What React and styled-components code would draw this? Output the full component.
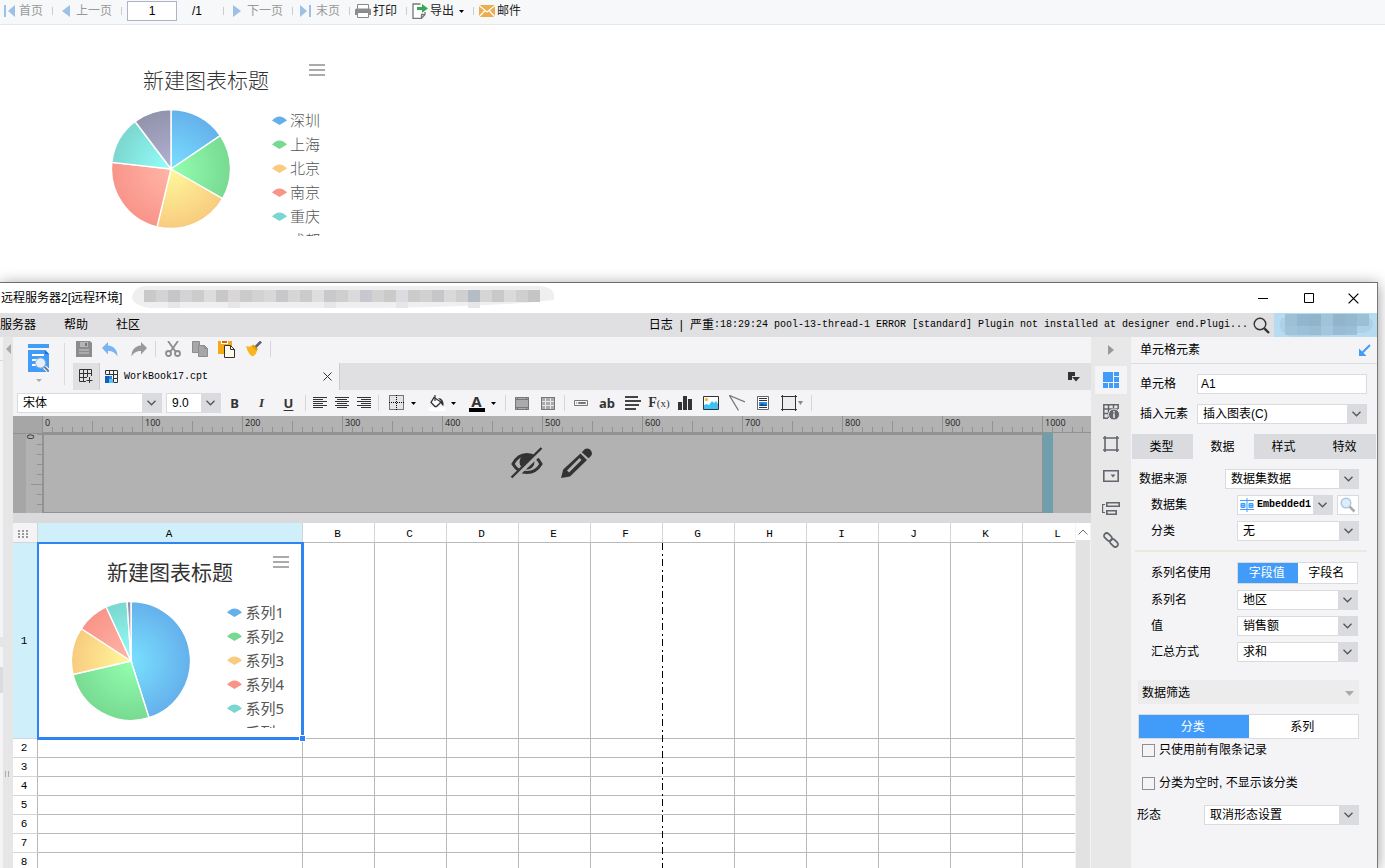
import React from "react";
import styled, { createGlobalStyle, css } from "styled-components";

const SANS = `"Liberation Sans", "Noto Sans CJK SC", sans-serif`;
const MONO = `"Liberation Mono", "Noto Sans CJK SC", monospace`;

const GlobalStyle = createGlobalStyle`
  * { box-sizing: border-box; }
  body { margin: 0; background: #fff; color: #000; font: 12px/16px ${SANS}; }
  button, input, select { font: inherit; color: inherit; }
  button { border: 0; padding: 0; background: none; }
  svg { display: block; flex: none; }
`;

const Page = styled.div`
  display: flex;
  flex-direction: column;
  height: 100vh;
  overflow: hidden;
`;

/* ---------- report preview ---------- */

const PreviewBar = styled.header`
  display: flex;
  align-items: center;
  height: 25px;
  padding: 0 4px 2px;
  background: #f6f8fa;
  border-bottom: 1px solid #e3e6ea;
`;

const BarItem = styled.button`
  display: flex;
  align-items: center;
  gap: ${(p) => p.$gap || 5}px;
  padding-left: ${(p) => p.$left || 0}px;
  margin-right: 9px;
  color: ${(p) => (p.disabled ? "#999" : "#222")};
  white-space: nowrap;
`;

const BarCaret = styled.span`
  margin-left: 3px;
`;

const BarSep = styled.span`
  width: 1px;
  height: 8px;
  background: #ccc;
`;

const PageInput = styled.input`
  width: 50px;
  height: 20px;
  margin-left: 5px;
  border: 1px solid #adb4c4;
  background: #fff;
  text-align: center;
  font-size: 12px;
`;

const PageTotal = styled.span`
  width: 46px;
  padding-left: 15px;
`;

const Preview = styled.section`
  padding: 26px 74px 36px;
`;

/* ---------- chart ---------- */

const ChartBox = styled.figure`
  position: relative;
  width: 264px;
  height: 195px;
  margin: 0;
  font-family: "Noto Sans", "Noto Sans CJK SC", sans-serif;
  font-weight: ${(p) => (p.$strong ? 400 : 300)};
`;

const ChartTitle = styled.figcaption`
  height: 57px;
  padding-top: 15px;
  font-size: 21px;
  line-height: 28px;
  text-align: center;
  color: #333;
`;

const ChartMenu = styled.button`
  position: absolute;
  top: 13px;
  right: 13px;
`;

const ChartBody = styled.div`
  display: flex;
  height: 128px;
  padding-right: 18px;
`;

const PieWrap = styled.div`
  flex: 1;
  display: flex;
  justify-content: center;
  padding: 1px 3px 0 0;
`;

const Legend = styled.ul`
  margin: 0;
  padding: 0;
  overflow: hidden;
  list-style: none;
`;

const LegendItem = styled.li`
  display: flex;
  align-items: center;
  gap: 3px;
  font-size: 15px;
  line-height: 24px;
  color: #555;
`;

const SLICES = [
  ["#64b0eb", "#7ae0ff"],
  ["#77da91", "#93ffb0"],
  ["#f8cb7f", "#fff99b"],
  ["#f99489", "#ffb6a8"],
  ["#7bd6cf", "#95fffa"],
  ["#9192ab", "#b2b2d2"],
];

const point = (deg) => {
  const a = (deg * Math.PI) / 180;
  return `${60 + 59.5 * Math.sin(a)} ${60 - 59.5 * Math.cos(a)}`;
};

const Pie = ({ id, stops }) => (
  <svg width="120" height="120" viewBox="0 0 120 120">
    <defs>
      {SLICES.map(([edge, center], i) => (
        <radialGradient key={edge} id={`${id}-${i}`} gradientUnits="userSpaceOnUse" cx="60" cy="60" r="60">
          <stop offset="0" stopColor={center} />
          <stop offset="1" stopColor={edge} />
        </radialGradient>
      ))}
    </defs>
    {SLICES.map(([edge], i) => {
      const from = i ? stops[i - 1] : 0;
      const to = stops[i];
      return (
        <path
          key={edge}
          d={`M60 60L${point(from)}A59.5 59.5 0 ${to - from > 180 ? 1 : 0} 1 ${point(to)}Z`}
          fill={`url(#${id}-${i})`}
          stroke="#fff"
          strokeWidth="1.4"
        />
      );
    })}
  </svg>
);

const Chart = ({ id, stops, names, strong }) => (
  <ChartBox $strong={strong}>
    <ChartTitle>新建图表标题</ChartTitle>
    <ChartMenu aria-label="menu">
      <svg width="16" height="12" fill="#aaa">
        <path d="M0 0h16v2H0zM0 5h16v2H0zM0 10h16v2H0z" />
      </svg>
    </ChartMenu>
    <ChartBody>
      <PieWrap>
        <Pie id={id} stops={stops} />
      </PieWrap>
      <Legend>
        {names.map((name, i) => (
          <LegendItem key={name}>
            <svg width="15" height="9">
              <path d="M0 4.500Q7.500 -3.500 15 4.500L7.500 9Z" fill={SLICES[i][0]} />
            </svg>
            {name}
          </LegendItem>
        ))}
      </Legend>
    </ChartBody>
  </ChartBox>
);

/* ---------- designer window ---------- */

const Window = styled.section`
  flex: 1;
  display: flex;
  flex-direction: column;
  min-height: 0;
  margin-right: 7px;
  background: #f4f4f7;
  border-top: 1px solid #6e6e6e;
  border-right: 1px solid #777;
  box-shadow: 0 2px 14px rgba(0, 0, 0, 0.4);
`;

const TitleBar = styled.div`
  display: flex;
  align-items: center;
  flex: none;
  height: 30px;
  padding: 0 18px 0 1px;
  background: #fff;
  white-space: nowrap;
`;

const TitleText = styled.span`
  margin-right: 10px;
`;

const WindowButtons = styled.div`
  display: flex;
  gap: 31px;
  margin-left: auto;
`;

const MenuBar = styled.nav`
  display: flex;
  align-items: center;
  flex: none;
  height: 24px;
  background: #e0e0e2;
  white-space: nowrap;
`;

const MenuItem = styled.button`
  margin-right: 28px;
`;

const LogLine = styled.div`
  display: flex;
  align-items: center;
  gap: 7px;
  margin-left: auto;
`;

const LogText = styled.span`
  font-family: ${MONO};
  font-size: 10px;
`;

const LogMessage = styled.span`
  display: flex;
  align-items: center;
`;

const SearchButton = styled.button`
  margin: 0 4px 0 5px;
`;

const UserBadge = styled.div`
  height: 24px;
  background: #b7dbf1;
`;

const Body = styled.div`
  flex: 1;
  display: flex;
  min-height: 0;
`;

const DockEdge = styled.div`
  display: flex;
  flex-direction: column;
  width: 3px;
  background: #f4f4f7;
`;

const DockBlock = styled.span`
  height: ${(p) => p.$size}px;
  margin-top: ${(p) => p.$top}px;
  background: ${(p) => p.$tone};
`;

const DockBar = styled.div`
  display: flex;
  flex-direction: column;
  align-items: flex-end;
  width: 10px;
  padding: 7px 2px 0 0;
  background: #e6e6e6;
`;

const DockGrip = styled.span`
  width: 4px;
  height: 6px;
  margin: 417px 2px 0 0;
  border: solid #aaa;
  border-width: 0 1px;
`;

const Main = styled.main`
  flex: 1;
  display: flex;
  flex-direction: column;
  min-width: 0;
`;

const TopTools = styled.div`
  display: flex;
  flex: none;
  height: 53px;
`;

const DataButton = styled.button`
  display: flex;
  flex-direction: column;
  align-items: center;
  gap: 6px;
  width: 51px;
  padding-top: 7px;
`;

const TallSep = styled.span`
  width: 1px;
  height: 42px;
  margin: 6px 8px 0 0;
  background: #dadbde;
`;

const TopRight = styled.div`
  flex: 1;
  min-width: 0;
`;

const ToolRow = styled.div`
  display: flex;
  align-items: center;
  height: 26px;
  padding-bottom: 2px;
`;

const Tool = styled.button`
  display: flex;
  align-items: center;
  justify-content: center;
  gap: ${(p) => p.$gap || 6}px;
  width: ${(p) => p.$w || 26}px;
  height: 22px;
  color: #333;
`;

const ToolSep = styled.span`
  width: 1px;
  height: 16px;
  margin: 0 3px;
  background: #d6d6da;
`;

const TabStrip = styled.div`
  display: flex;
  align-items: center;
  height: 27px;
  padding-right: 11px;
  background: #e0e0e2;
`;

const FileTab = styled.div`
  display: flex;
  align-items: center;
  gap: 6px;
  width: 241px;
  height: 27px;
  padding: 0 7px 0 5px;
  margin-right: auto;
  background: #f4f4f7;
  border: solid #cbccd0;
  border-width: 0 1px;
  font-family: ${MONO};
  font-size: 10px;
`;

const CloseTab = styled.button`
  margin-left: auto;
`;

const FormatBar = styled.div`
  display: flex;
  align-items: center;
  flex: none;
  height: 26px;
  padding-left: 4px;
`;

const Letter = styled.span`
  font: ${(p) => (p.$italic ? "italic" : "normal")} bold 13px/14px
    ${(p) => (p.$italic ? `"Liberation Serif", serif` : `"Noto Sans", sans-serif`)};
  text-decoration: ${(p) => (p.$under ? "underline" : "none")};
  text-underline-offset: 2px;
`;

const ColorLetter = styled.span`
  width: 16px;
  border-bottom: 4px solid #000;
  font: bold 15px/13px "Noto Sans", sans-serif;
  text-align: center;
`;

const Formula = styled.span`
  font: bold 14px/16px "Liberation Serif", serif;

  small {
    font-size: 11px;
    font-weight: normal;
  }
`;

/* select with its own arrow cell */

const SelectShell = styled.div`
  display: flex;
  align-items: center;
  position: relative;
  flex: ${(p) => (p.$w ? "none" : 1)};
  width: ${(p) => (p.$w ? `${p.$w}px` : "auto")};
  min-width: 0;
  height: 20px;
  margin-right: ${(p) => p.$gap || 0}px;
  padding-left: ${(p) => (p.$icon ? 2 : 0)}px;
  background: linear-gradient(#dadbde, #dadbde) right / 19px 100% no-repeat #fff;
  border: 1px solid #dadbde;
`;

const Native = styled.select`
  flex: 1;
  min-width: 0;
  height: 18px;
  padding: 0 19px 0 ${(p) => (p.$mono ? 3 : 5)}px;
  appearance: none;
  background: none;
  border: 0;
  ${(p) =>
    p.$mono &&
    css`
      font-family: ${MONO};
      font-size: 10px;
      font-weight: bold;
    `}
`;

const ArrowMark = styled.svg`
  position: absolute;
  right: 5px;
  top: 6px;
  pointer-events: none;
`;

const Select = ({ id, value, w, gap, icon, mono, label }) => (
  <SelectShell $w={w} $gap={gap} $icon={!!icon}>
    {icon}
    <Native id={id} aria-label={label} $mono={mono}>
      <option>{value}</option>
    </Native>
    <ArrowMark width="9" height="6" fill="none" stroke="#555" strokeWidth="1.3">
      <path d="M.5 .8l4 4 4-4" />
    </ArrowMark>
  </SelectShell>
);

/* ---------- rulers and parameter pane ---------- */

const Ruler = styled.div`
  display: flex;
  flex: none;
  height: 17px;
  padding-left: 29px;
  overflow: hidden;
  background: linear-gradient(#a6a6a6, #a6a6a6) left / 29px 100% no-repeat #b2b2b2;
`;

const RulerMark = styled.span`
  flex: none;
  width: 100px;
  height: 17px;
  padding-left: 3px;
  border-bottom: 1px solid #929292;
  background:
    linear-gradient(#929292, #929292) 0 0 / 1px 100% no-repeat,
    linear-gradient(#929292, #929292) 50px 100% / 1px 11px no-repeat,
    repeating-linear-gradient(90deg, #929292 0 1px, transparent 1px 10px) 0 100% / 100% 5px no-repeat;
  font: 9px/14px "Open Sans", sans-serif;
  color: #222;
`;

const ParamPane = styled.div`
  display: flex;
  position: relative;
  flex: none;
  height: 80px;
  overflow: hidden;
  background: #b2b2b2;
`;

const SideRuler = styled.div`
  width: 29px;
  padding-left: 13px;
  background:
    linear-gradient(#929292, #929292) 18px 50px / 11px 1px no-repeat,
    repeating-linear-gradient(#929292 0 1px, transparent 1px 10px) 100% 0 / 5px 100% no-repeat,
    linear-gradient(#a6a6a6, #a6a6a6) left / 13px 100% no-repeat #b2b2b2;
  border-top: 1px solid #929292;
`;

const SideZero = styled.span`
  display: block;
  width: 10px;
  font: 9px/10px "Open Sans", sans-serif;
  writing-mode: vertical-rl;
  transform: rotate(180deg);
  color: #222;
`;

const ParamBody = styled.div`
  width: 1001px;
  border: solid #929292;
  border-width: 2px 1px 1px 2px;
`;

const ParamHandle = styled.div`
  width: 10px;
  background: #6f9eac;
`;

const ParamActions = styled.div`
  display: flex;
  justify-content: center;
  gap: 17px;
  position: absolute;
  inset: 14px 3px auto 0;
`;

const PaneGap = styled.div`
  flex: none;
  height: 10px;
  background: #dadadc;
`;

/* ---------- sheet ---------- */

const SheetArea = styled.div`
  flex: 1;
  display: flex;
  min-height: 0;
`;

const SheetView = styled.div`
  flex: 1;
  position: relative;
  min-width: 0;
  overflow: hidden;
  background: #fff;
`;

const Sheet = styled.table`
  width: 1082px;
  table-layout: fixed;
  border-collapse: separate;
  border-spacing: 0;
`;

const Col = styled.col`
  width: ${(p) => p.$w}px;
`;

const Head = styled.th`
  height: 20px;
  padding: 2px 2px 0 0;
  border-right: 1px solid #d4d5d8;
  border-bottom: 1px solid #b9b9b9;
  background: ${(p) => (p.$active ? "#cff0fb" : "#fff")};
  font: 11px/16px "Liberation Mono", monospace;
`;

const RowHead = styled(Head)`
  height: ${(p) => (p.$active ? 196 : 19)}px;
  padding-top: 0;
  border-right-color: #b9b9b9;
  border-bottom-color: #d4d5d8;
`;

const Corner = styled.td`
  padding: 3px 0 0 5px;
  background: #f4f4f7;
  border-right: 1px solid #d4d5d8;
  border-bottom: 1px solid #d4d5d8;
`;

const Cell = styled.td`
  position: relative;
  padding: 0;
  vertical-align: top;
  border-right: 1px solid #b9b9b9;
  border-bottom: 1px solid #b9b9b9;
`;

const Selection = styled.div`
  position: absolute;
  z-index: 1;
  inset: -1px -2px -2px -1px;
  border: solid #3083f2;
  border-width: 2px 3px 3px 2px;
  pointer-events: none;

  &::after {
    content: "";
    position: absolute;
    right: -4px;
    bottom: -4px;
    width: 5px;
    height: 5px;
    background: #3083f2;
    outline: 1px solid #fff;
  }
`;

const PageBreak = styled.div`
  position: absolute;
  top: 20px;
  bottom: 0;
  left: 649px;
  width: 1px;
  background: repeating-linear-gradient(#000 0 7px, #fff 7px 11px, #000 11px 13px, #fff 13px 16px);
`;

const ScrollBar = styled.div`
  width: 16px;
  background: #e2e2e2;
  border: solid #f4f4f7;
  border-width: 0 1px;
`;

const ScrollUp = styled.button`
  display: flex;
  align-items: center;
  justify-content: center;
  width: 100%;
  height: 17px;
  background: #fff;
`;

/* ---------- right side ---------- */

const IconRail = styled.aside`
  display: flex;
  flex-direction: column;
  align-items: center;
  gap: 4px;
  width: 40px;
  background: #e8e8e8;
`;

const RailButton = styled.button`
  display: flex;
  align-items: center;
  justify-content: center;
  width: 32px;
  height: ${(p) => (p.$short ? 25 : 28)}px;
  background: ${(p) => (p.$active ? "#f4f4f7" : "transparent")};
`;

const Panel = styled.aside`
  width: 246px;
  background: #f4f4f7;
`;

const PanelHead = styled.div`
  display: flex;
  align-items: center;
  justify-content: space-between;
  height: 27px;
  padding: 0 6px 0 9px;
  border-bottom: 1px solid #dadbde;
`;

const Fields = styled.div`
  display: flex;
  flex-direction: column;
  gap: ${(p) => p.$gap || 6}px;
  padding: ${(p) => p.$pad};
`;

const Field = styled.div`
  display: flex;
  align-items: center;
  padding-left: ${(p) => p.$indent || 0}px;
`;

const FieldLabel = styled.label`
  flex: none;
  width: ${(p) => p.$w}px;
  white-space: nowrap;
`;

const TextBox = styled.input`
  flex: 1;
  min-width: 0;
  height: 20px;
  padding: 0 3px;
  background: #fff;
  border: 1px solid #dadbde;
`;

const PanelTabs = styled.div`
  display: flex;
  height: 25px;
  margin: 0 1px;
  background: #dadbde;
`;

const PanelTab = styled.button`
  flex: 1;
  padding-right: 2px;
  background: ${(p) => (p.$active ? "#f4f4f7" : "transparent")};
`;

const PreviewButton = styled.button`
  display: flex;
  align-items: center;
  justify-content: center;
  width: 22px;
  height: 20px;
  background: #fff;
  border: 1px solid #dadbde;
`;

const Rule = styled.hr`
  height: 2px;
  margin: 0 10px 0 4px;
  border: 0;
  background: #e9eadf;
`;

const Segment = styled.div`
  flex: 1;
  display: flex;
  height: ${(p) => p.$h}px;
  background: #fff;
  border: 1px solid #dadbde;
`;

const SegmentButton = styled.button`
  flex: 1;
  padding-right: 2px;
  background: ${(p) => (p.$active ? "#419bf9" : "#fff")};
  color: ${(p) => (p.$active ? "#fff" : "#000")};
`;

const Filter = styled.section`
  display: flex;
  flex-direction: column;
  gap: 10px;
  padding: 18px 18px 0 7px;
`;

const FilterHead = styled.button`
  display: flex;
  align-items: center;
  justify-content: space-between;
  height: 24px;
  padding: 2px 5px 0 4px;
  background: #ececec;
`;

const Checks = styled.div`
  display: flex;
  flex-direction: column;
  gap: 17px;
  padding: 3px 18px 0 11px;
`;

const Check = styled.label`
  display: flex;
  align-items: center;
  gap: 4px;
`;

const CheckBox = styled.input`
  appearance: none;
  width: 13px;
  height: 13px;
  margin: 0;
  border: 1px solid #8e8e93;
`;

/* ---------- icons ---------- */

const Triangle = ({ left, bar }) => (
  <svg width={bar ? 11 : 9} height="12" fill="#9dc0e4">
    {left ? (
      <path d={bar ? "M0 0h2v12H0zM11 0v12L4 6z" : "M8 0v12L0 6z"} />
    ) : (
      <path d={bar ? "M0 0v12l7-6zM9 0h2v12H9z" : "M0 0v12l8-6z"} />
    )}
  </svg>
);

const Caret = ({ color = "#000", w = 5, h = 3 }) => (
  <svg width={w} height={h} viewBox="0 0 6 3" preserveAspectRatio="none" fill={color}>
    <path d="M0 0h6L3 3z" />
  </svg>
);

const Printer = () => (
  <svg width="16" height="14">
    <path d="M2.500 5V.5h11V5" fill="#fff" stroke="#888" />
    <path d="M1.500 4.500h13a1.500 1.500 0 0 1 1.500 1.500v5H0V6a1.500 1.500 0 0 1 1.500-1.500z" fill="#8d8d8d" />
    <path d="M2.500 8.500h11v5h-11z" fill="#fff" stroke="#888" />
  </svg>
);

const Export = () => (
  <svg width="16" height="16" fill="none" stroke="#777" strokeWidth="1.300">
    <path d="M8.500 1H1v14.300h8.500L13 11.500V9" fill="#fff" />
    <path d="M9.500 15v-3.500H13" />
    <path d="M5 4h5V1l6 4.500-6 4.300V7H5z" fill="#35a853" stroke="none" />
  </svg>
);

const Mail = () => (
  <svg width="16" height="12">
    <path d="M0 0h16v12H0z" fill="#ecad4f" />
    <path d="M0 .5l8 6.500 8-6.500M0 12l6-6.500M16 12l-6-6.500" fill="none" stroke="#fff" strokeWidth="1.200" />
  </svg>
);

const TITLE_TONES = "#c9c9c9 #d3d2d5 #c6c6c6 #d3d3d6 #ccc #dcdcdc #c8c8c8 #d8d6d6 #cbcbcb #d2d2d5 #d8d8d8 #c8c8cb #d6d6d6 #cdcaca #dedede #c9c9cc #cfcfcf #dadada #c7c7cf #d2d2d2 #cacaca #dcdce0 #cbcbcb #d1d1d1 #c6c6c8 #d9d9d9 #cfcfd1 #b5bcc6 #d5d5d5 #c9c9c9 #dadada #cfcfcf #c5c5c5".split(" ");

const TitleMosaic = () => (
  <svg width="422" height="26">
    <path d="M12 1h396q14 2 14 9v5q-60 7-180 8H18Q0 20 0 12 2 2 12 1z" fill="#efefef" />
    {TITLE_TONES.map((tone, i) => (
      <rect key={i} x={12 + i * 12} y="5" width="12" height="12" fill={tone} />
    ))}
    {[2, 7, 15, 21, 27].map((i) => (
      <rect key={i} x={12 + i * 12} y="17" width="12" height="6" fill="#e6e6e8" />
    ))}
  </svg>
);

const BADGE_TONES = ["#9dc0d5", "#91b7ce", "#8fb4cb", "#a0c3d8", "#92b5cb", "#94b9cf", "#9bbfd5"];

const BadgeMosaic = () => (
  <svg width="103" height="24">
    <path d="M8 5q40-6 80-4 13 4 11 12-3 8-16 7-50 5-68 3-14-6-7-18z" fill="#aed1e6" />
    {BADGE_TONES.map((tone, i) => (
      <rect key={i} x={11 + i * 12} y="1" width="12" height="12" fill={tone} />
    ))}
    {BADGE_TONES.slice(0, 6).map((tone, i) => (
      <rect key={i} x={11 + i * 12} y="13" width="12" height="9" fill={BADGE_TONES[6 - i]} opacity=".7" />
    ))}
  </svg>
);

const Search = () => (
  <svg width="17" height="17" fill="none" stroke="#333">
    <circle cx="7" cy="7" r="5.800" strokeWidth="1.400" />
    <path d="M11.300 11.300l4.700 4.700" strokeWidth="2.400" />
  </svg>
);

const DataIcon = () => (
  <svg width="22" height="29">
    <path d="M0 0h21v4H0zM0 6h17l4 4v18H0z" fill="#419bf9" />
    <path d="M17 6v4h4z" fill="#1f6fc4" />
    <path d="M4 11h12M4 16h5M4 21h4" stroke="#fff" strokeWidth="2" />
    <circle cx="12.500" cy="19" r="5" fill="#e3f0fa" stroke="#9fb6c8" />
    <path d="M16.500 23l3.500 3.500" stroke="#fff" strokeWidth="4" />
    <path d="M16.500 23l3.500 3.500" stroke="#777" strokeWidth="2" />
  </svg>
);

const Save = () => (
  <svg width="16" height="16">
    <path d="M0 0h14l2 2v14H0z" fill="#8c8c8c" />
    <path d="M4 1h8v5H4z" fill="#b5b5b5" />
    <path d="M9 2h2v3H9z" fill="#777" />
    <path d="M3 9h10M3 12h10" stroke="#b5b5b5" strokeWidth="1.500" />
  </svg>
);

const Undo = ({ redo }) => (
  <svg width="16" height="15" viewBox="0 0 16 15">
    <path
      d="M6 0v3.500C12 4 15.500 8 15.500 14.500 13 10.500 10.500 9 6 9v3.500L0 6z"
      fill={redo ? "#999" : "#7ab5f2"}
      transform={redo ? "matrix(-1 0 0 1 16 0)" : undefined}
    />
  </svg>
);

const Cut = () => (
  <svg width="16" height="16" fill="none" stroke="#8c8c8c" strokeWidth="1.800">
    <path d="M3 0l7.500 10.500M13 0L5.500 10.500" />
    <circle cx="3.500" cy="12.500" r="2.500" />
    <circle cx="12.500" cy="12.500" r="2.500" />
  </svg>
);

const Copy = () => (
  <svg width="16" height="16" fill="#a6a6a6" stroke="#8c8c8c">
    <path d="M.5 .5h7v11h-7z" />
    <path d="M6.500 4.500h6l3 3v8h-9z" />
    <path d="M12.500 4.500v3h3" fill="none" />
  </svg>
);

const Paste = () => (
  <svg width="17" height="17">
    <path d="M0 0h14v13H0z" fill="#f4a914" />
    <path d="M3 0h7v3H3z" fill="#fff" />
    <path d="M4 0h5v2H4z" fill="#e2600c" />
    <path d="M6.500 4.500h6l4 4v8h-10z" fill="#fff9e8" stroke="#333" />
    <path d="M12.500 4.500v4h4" fill="none" stroke="#333" />
  </svg>
);

const Brush = () => (
  <svg width="16" height="16">
    <path d="M15 .5L8.500 7" stroke="#5b6273" strokeWidth="2.600" />
    <path d="M0 5q4 1.500 6-.5l5 5.500q-1 4-4.500 5.500Q2 13 0 5z" fill="#f8b61c" />
    <path d="M5.500 5l2-1.500 4.500 4.500-1.500 2z" fill="#e59a10" />
  </svg>
);

const GridPlus = () => (
  <svg width="14" height="15" fill="none" stroke="#333">
    <path d="M7 12.500H.5V.5h12V7M.5 4.500h12M.5 8.500H8M4.500 .5v12M8.500 .5V8M10.500 8v6M7.500 11.500h6" />
  </svg>
);

const BookIcon = () => (
  <svg width="13" height="14" fill="none" stroke="#333">
    <path d="M.5 4V.5h12v12H9M.5 4.500h12M8 8.500h4.500M4.500 .5v4M8.500 .5v12" />
    <path d="M0 6h4v7H0z" fill="#1262b8" stroke="none" />
    <path d="M4 6h3v3H4z" fill="#2d8ae0" stroke="none" />
    <path d="M4 9h4v4H4z" fill="#4fc3f7" stroke="none" />
  </svg>
);

const Cross = ({ size = 9, color = "#333" }) => (
  <svg width={size} height={size} viewBox="0 0 9 9" stroke={color}>
    <path d="M.5 .5l8 8M8.500 .5l-8 8" />
  </svg>
);

const TabListIcon = () => (
  <svg width="12" height="10" fill="#333">
    <path d="M0 0h7v4H4v4H0zM4 5h8L8 9.500z" />
  </svg>
);

const AlignIcon = ({ d }) => (
  <svg width="15" height="12" stroke="#333" strokeWidth="1">
    <path d={d} />
  </svg>
);

const BorderIcon = () => (
  <svg width="16" height="16" fill="#e4e4e7" stroke="#000">
    <path d="M.5 .5h14v14H.5zM7.500 0v15M0 7.500h15" strokeDasharray="1 1" />
  </svg>
);

const FillIcon = () => (
  <svg width="16" height="16">
    <path d="M0 12h16v4H0z" fill="#fff" />
    <path d="M5 2.500l7 4.500-4.500 4.500H6L2 7.500z" fill="#fff" stroke="#333" strokeWidth="1.300" />
    <path d="M6 0v6" stroke="#333" strokeWidth="1.200" />
    <path d="M9 3q6 0 5.500 8Q11 9 12 6z" fill="#333" />
  </svg>
);

const MergeIcon = ({ split }) => (
  <svg width="14" height="13" fill="none" stroke="#777">
    <path d="M.5 .5h13v12H.5z" fill="#aaa" />
    {split ? (
      <path d="M1 4.500h12M1 8.500h12M4.500 1v11M9.500 1v11" stroke="#e6e6e6" />
    ) : (
      <path d="M0 2.500h14M0 10.500h14M2.500 0v3M11.500 0v3M2.500 10v3M11.500 10v3" />
    )}
    <path d="M.5 .5h13v12H.5z" />
  </svg>
);

const FieldIcon = () => (
  <svg width="14" height="6" fill="none" stroke="#777">
    <path d="M.5 .5h13v5H.5zM2 3h1M4.500 2.500h7v1h-7z" />
  </svg>
);

const ParagraphIcon = () => (
  <svg width="16" height="14" stroke="#444" strokeWidth="2">
    <path d="M0 1h13M0 5h16M0 9h14M0 13h11" />
  </svg>
);

const BarsIcon = () => (
  <svg width="14" height="14" fill="#333">
    <path d="M0 6h4v8H0zM5 0h4v14H5zM10 3h4v11h-4z" />
  </svg>
);

const PictureIcon = () => (
  <svg width="16" height="14">
    <path d="M.5 .5h15v13H.5z" fill="#fff" stroke="#333" />
    <circle cx="3.500" cy="3.500" r="1.700" fill="#f8b74a" />
    <path d="M1 9l3-1 2 1 3-4 2 2 2-2 2 3v5H1z" fill="#3fc1f5" />
  </svg>
);

const SlopeIcon = () => (
  <svg width="16" height="16" fill="none" stroke="#777" strokeWidth="1.300">
    <path d="M16 7L.5 .5l9 15" />
  </svg>
);

const SubReport = () => (
  <svg width="12" height="14">
    <path d="M.5 .5h11v13H.5z" fill="#fff" stroke="#666" />
    <path d="M2 2.500h8M2 4.500h8M2 11.500h8" stroke="#333" />
    <path d="M2 6h8v4H2z" fill="#2f8eea" />
    <path d="M2 10l3-3 2 2 2-1 1 2z" fill="#0a4c9a" />
  </svg>
);

const ShapeIcon = () => (
  <svg width="16" height="16" fill="#eee" stroke="#333">
    <path d="M1.500 1.500h13v13h-13zM1.500 0v16M14.500 0v16M0 1.500h16M0 14.500h16" />
  </svg>
);

const FrameIcon = () => (
  <svg width="16" height="16" fill="none" stroke="#63666e" strokeWidth="1.600">
    <path d="M2 0v16M14 0v16M0 2h16M0 14h16" />
  </svg>
);

const EyeOff = () => (
  <svg width="34" height="32" viewBox="0 0 34 32">
    <path d="M3 17Q8 7.500 17 7.500T31 17Q26 25.500 17 25.500T3 17z" fill="none" stroke="#333" strokeWidth="3" />
    <circle cx="17" cy="15" r="7.500" fill="#333" />
    <path d="M2.500 31.500L33 3" stroke="#b2b2b2" strokeWidth="5" />
    <path d="M1.500 30.500L31.500 1" stroke="#333" strokeWidth="2.400" />
  </svg>
);

const Pencil = () => (
  <svg width="31" height="32" viewBox="0 0 31 32" fill="#333">
    <path d="M22 4q3-4 7-1.500 4 4 0 7.500l-1.500 1.200-6.700-6z" />
    <path d="M19.500 6.500l6.500 6.500L9 29.500 0 31l2.200-8.500zM18.500 11L6 23.500l2 2L20.500 13z" fillRule="evenodd" />
  </svg>
);

const CornerDots = () => (
  <svg width="11" height="8" fill="#999">
    <path d="M0 0h2v2H0zM4 0h2v2H4zM8 0h2v2H8zM0 3h2v2H0zM4 3h2v2H4zM8 3h2v2H8zM0 6h2v2H0zM4 6h2v2H4zM8 6h2v2H8z" />
  </svg>
);

const CellElementIcon = () => (
  <svg width="16" height="16" fill="#419bf9">
    <path d="M0 0h10v10H0zM11 0h5v4h-5zM11 5h5v5h-5zM0 11h5v5H0zM6 11h4v5H6zM11 11h5v5h-5z" />
  </svg>
);

const CellAttrIcon = () => (
  <svg width="17" height="16" fill="none" stroke="#63666e" strokeWidth="1.500">
    <path d="M5 14.200H.8V.8h14.400V5M0 5h15M0 9.500h6M5.500 1v13M10.500 1v4" />
    <circle cx="11" cy="10.500" r="5.500" fill="#63666e" stroke="#e8e8e8" strokeWidth="1" />
    <path d="M11 7v1.600M11 9.500v4.500" stroke="#e8e8e8" strokeWidth="1.600" />
  </svg>
);

const WidgetIcon = () => (
  <svg width="16" height="12">
    <path d="M.8 .8h14.400v10.400H.8z" fill="none" stroke="#63666e" strokeWidth="1.600" />
    <path d="M7.500 4.500h5L10 7.500z" fill="#63666e" />
  </svg>
);

const FloatIcon = () => (
  <svg width="18" height="13" fill="none" stroke="#63666e" strokeWidth="1.600">
    <path d="M4.800 .8h12.400v3.400H4.800zM4.800 8.800h9.400v3.400H4.800z" />
    <path d="M3 2.500H.6V10.500H3" strokeWidth="1.200" />
  </svg>
);

/* two chain links on the falling diagonal */
const LinkIcon = () => (
  <svg width="16" height="16" fill="none" stroke="#63666e" strokeWidth="1.800">
    <rect x="-4.500" y="-2.700" width="9" height="5.400" rx="2.700" transform="translate(5 5) rotate(45)" />
    <rect x="-4.500" y="-2.700" width="9" height="5.400" rx="2.700" transform="translate(11 11) rotate(45)" />
  </svg>
);

const DockArrow = () => (
  <svg width="12" height="12">
    <path d="M11 1L3 9" stroke="#419bf9" strokeWidth="2" />
    <path d="M0 4.500V12h7.500z" fill="#419bf9" />
  </svg>
);

const DatasetIcon = () => (
  <svg width="14" height="14" fill="none" stroke="#419bf9">
    <path d="M0 2.500h14M7 0v14M0 11.500h14" />
    <path d="M1 5.500h4v4H1zM9 5.500h4v4H9z" fill="#8cc3fb" />
    <path d="M1 7.500h4M9 7.500h4" />
  </svg>
);

const Glass = () => (
  <svg width="16" height="16">
    <path d="M9 9l5.500 5.500" stroke="#aaa" strokeWidth="2.600" />
    <circle cx="6" cy="6" r="4.800" fill="#dcedfb" stroke="#aac6e0" strokeWidth="1.400" />
  </svg>
);

/* ---------- data ---------- */

const COLUMNS = ["A", "B", "C", "D", "E", "F", "G", "H", "I", "J", "K", "L"];
const ROWS = [1, 2, 3, 4, 5, 6, 7, 8];
const MARKS = [0, 100, 200, 300, 400, 500, 600, 700, 800, 900, 1000];

const ALIGNS = [
  ["左对齐", "M0 .5h14M0 2.500h10M0 4.500h14M0 6.500h10M0 8.500h14M0 10.500h10"],
  ["居中", "M0 .5h14M2 2.500h10M0 4.500h14M2 6.500h10M0 8.500h14M2 10.500h10"],
  ["右对齐", "M0 .5h14M4 2.500h10M0 4.500h14M4 6.500h10M0 8.500h14M4 10.500h10"],
];

const INSERTS = [
  ["控件", <FieldIcon />],
  ["文本", <Letter>ab</Letter>],
  ["富文本", <ParagraphIcon />],
  ["公式", <Formula>F<small>(x)</small></Formula>],
  ["图表", <BarsIcon />],
  ["图片", <PictureIcon />],
  ["斜线", <SlopeIcon />],
  ["子报表", <SubReport />],
];

const RAIL = [
  ["单元格元素", <CellElementIcon />],
  ["单元格属性", <CellAttrIcon />],
  ["悬浮元素", <FrameIcon />],
  ["控件设置", <WidgetIcon />],
  ["条件属性", <FloatIcon />],
  ["超级链接", <LinkIcon />],
];

const PreviewToolbar = () => (
  <PreviewBar>
    <BarItem disabled $gap={4}><Triangle left bar />首页</BarItem>
    <BarSep />
    <BarItem disabled $left={9}><Triangle left />上一页</BarItem>
    <BarSep />
    <PageInput aria-label="页码" defaultValue="1" />
    <PageTotal>/1</PageTotal>
    <BarSep />
    <BarItem disabled $left={9}><Triangle />下一页</BarItem>
    <BarSep />
    <BarItem disabled $left={7}><Triangle bar />末页</BarItem>
    <BarSep />
    <BarItem $left={5} $gap={2}><Printer />打印</BarItem>
    <BarSep />
    <BarItem $left={5} $gap={2}><Export />导出<BarCaret><Caret h={3} /></BarCaret></BarItem>
    <BarSep />
    <BarItem $left={5} $gap={2}><Mail />邮件</BarItem>
  </PreviewBar>
);

const TopToolbar = () => (
  <TopTools>
    <DataButton aria-label="数据集">
      <DataIcon />
      <Caret color="#aaa" w={6} />
    </DataButton>
    <TallSep />
    <TopRight>
      <ToolRow>
        <Tool $w={22} aria-label="保存"><Save /></Tool>
        <Tool $w={30} aria-label="撤销"><Undo /></Tool>
        <Tool $w={27} aria-label="重做"><Undo redo /></Tool>
        <ToolSep />
        <Tool $w={27} aria-label="剪切"><Cut /></Tool>
        <Tool $w={27} aria-label="复制"><Copy /></Tool>
        <Tool $w={27} aria-label="粘贴"><Paste /></Tool>
        <Tool $w={27} aria-label="格式刷"><Brush /></Tool>
        <ToolSep />
      </ToolRow>
      <TabStrip>
        <Tool aria-label="新建"><GridPlus /></Tool>
        <FileTab>
          <BookIcon />
          WorkBook17.cpt
          <CloseTab aria-label="关闭"><Cross /></CloseTab>
        </FileTab>
        <TabListIcon />
      </TabStrip>
    </TopRight>
  </TopTools>
);

const FormatToolbar = () => (
  <FormatBar>
    <Select label="字体" value="宋体" w={145} gap={4} />
    <Select label="字号" value="9.0" w={55} />
    <Tool $w={27} aria-label="加粗"><Letter>B</Letter></Tool>
    <Tool $w={27} aria-label="斜体"><Letter $italic>I</Letter></Tool>
    <Tool $w={27} aria-label="下划线"><Letter $under>U</Letter></Tool>
    <ToolSep />
    {ALIGNS.map(([name, d]) => (
      <Tool key={name} $w={22} aria-label={name}><AlignIcon d={d} /></Tool>
    ))}
    <ToolSep />
    <Tool $w={40} aria-label="边框"><BorderIcon /><Caret /></Tool>
    <Tool $w={40} aria-label="背景"><FillIcon /><Caret /></Tool>
    <Tool $w={40} aria-label="颜色"><ColorLetter>A</ColorLetter><Caret /></Tool>
    <ToolSep />
    <Tool aria-label="合并"><MergeIcon /></Tool>
    <Tool aria-label="拆分"><MergeIcon split /></Tool>
    <ToolSep />
    {INSERTS.map(([name, icon]) => (
      <Tool key={name} aria-label={name}>{icon}</Tool>
    ))}
    <Tool $w={32} $gap={1} aria-label="悬浮元素"><ShapeIcon /><Caret color="#888" h={4} /></Tool>
    <ToolSep />
  </FormatBar>
);

const Spreadsheet = () => (
  <SheetArea>
    <SheetView>
      <Sheet>
        <colgroup>
          <Col $w={25} />
          {COLUMNS.map((c) => (
            <Col key={c} $w={c === "A" ? 265 : 72} />
          ))}
        </colgroup>
        <thead>
          <tr>
            <Corner><CornerDots /></Corner>
            {COLUMNS.map((c) => (
              <Head key={c} $active={c === "A"}>{c}</Head>
            ))}
          </tr>
        </thead>
        <tbody>
          {ROWS.map((r) => (
            <tr key={r}>
              <RowHead $active={r === 1}>{r}</RowHead>
              {COLUMNS.map((c) => (
                <Cell key={c}>
                  {r === 1 && c === "A" && (
                    <>
                      <Chart
                        id="design"
                        strong
                        stops={[162.4, 256.9, 303.1, 335.3, 356.2, 360]}
                        names={["系列1", "系列2", "系列3", "系列4", "系列5", "系列6"]}
                      />
                      <Selection />
                    </>
                  )}
                </Cell>
              ))}
            </tr>
          ))}
        </tbody>
      </Sheet>
      <PageBreak />
    </SheetView>
    <ScrollBar>
      <ScrollUp aria-label="向上">
        <svg width="10" height="6" fill="none" stroke="#777"><path d="M.5 5.500L5 1l4.500 4.500" /></svg>
      </ScrollUp>
    </ScrollBar>
  </SheetArea>
);

const PropertyPanel = () => (
  <Panel>
    <PanelHead>
      单元格元素
      <DockArrow />
    </PanelHead>
    <Fields $gap={10} $pad="10px 10px 10px 9px">
      <Field>
        <FieldLabel $w={57} htmlFor="cell">单元格</FieldLabel>
        <TextBox id="cell" defaultValue="A1" />
      </Field>
      <Field>
        <FieldLabel $w={57} htmlFor="insert">插入元素</FieldLabel>
        <Select id="insert" value="插入图表(C)" />
      </Field>
    </Fields>
    <PanelTabs>
      <PanelTab>类型</PanelTab>
      <PanelTab $active>数据</PanelTab>
      <PanelTab>样式</PanelTab>
      <PanelTab>特效</PanelTab>
    </PanelTabs>
    <Fields $pad="10px 18px 9px 8px">
      <Field>
        <FieldLabel $w={86} htmlFor="source">数据来源</FieldLabel>
        <Select id="source" value="数据集数据" />
      </Field>
      <Field $indent={12}>
        <FieldLabel $w={86} htmlFor="dataset">数据集</FieldLabel>
        <Select id="dataset" value="Embedded1" mono gap={4} icon={<DatasetIcon />} />
        <PreviewButton aria-label="预览"><Glass /></PreviewButton>
      </Field>
      <Field $indent={12}>
        <FieldLabel $w={86} htmlFor="category">分类</FieldLabel>
        <Select id="category" value="无" />
      </Field>
    </Fields>
    <Rule />
    <Fields $pad="10px 19px 0 20px">
      <Field>
        <FieldLabel as="span" $w={86}>系列名使用</FieldLabel>
        <Segment $h={22}>
          <SegmentButton $active>字段值</SegmentButton>
          <SegmentButton>字段名</SegmentButton>
        </Segment>
      </Field>
      <Field>
        <FieldLabel $w={86} htmlFor="series">系列名</FieldLabel>
        <Select id="series" value="地区" />
      </Field>
      <Field>
        <FieldLabel $w={86} htmlFor="val">值</FieldLabel>
        <Select id="val" value="销售额" />
      </Field>
      <Field>
        <FieldLabel $w={86} htmlFor="sum">汇总方式</FieldLabel>
        <Select id="sum" value="求和" />
      </Field>
    </Fields>
    <Filter>
      <FilterHead>
        数据筛选
        <Caret color="#aaa" w={9} h={5} />
      </FilterHead>
      <Field>
        <Segment $h={25}>
          <SegmentButton $active>分类</SegmentButton>
          <SegmentButton>系列</SegmentButton>
        </Segment>
      </Field>
    </Filter>
    <Checks>
      <Check><CheckBox type="checkbox" />只使用前有限条记录</Check>
      <Check><CheckBox type="checkbox" />分类为空时, 不显示该分类</Check>
    </Checks>
    <Fields $pad="14px 18px 0 6px">
      <Field>
        <FieldLabel $w={67} htmlFor="shape">形态</FieldLabel>
        <Select id="shape" value="取消形态设置" />
      </Field>
    </Fields>
  </Panel>
);

const App = () => (
  <Page>
    <GlobalStyle />
    <PreviewToolbar />
    <Preview>
      <Chart
        id="preview"
        stops={[55.9, 119.9, 193.6, 276.4, 322.9, 360]}
        names={["深圳", "上海", "北京", "南京", "重庆", "成都"]}
      />
    </Preview>

    <Window>
      <TitleBar>
        <TitleText>远程服务器2[远程环境]</TitleText>
        <TitleMosaic />
        <WindowButtons>
          <button aria-label="最小化">
            <svg width="15" height="12" stroke="#000"><path d="M2 6.500h10" /></svg>
          </button>
          <button aria-label="最大化">
            <svg width="15" height="12" fill="none" stroke="#000"><path d="M2.500 1.500h9v9h-9z" /></svg>
          </button>
          <button aria-label="关闭"><Cross size={11} color="#000" /></button>
        </WindowButtons>
      </TitleBar>
      <MenuBar>
        <MenuItem>服务器</MenuItem>
        <MenuItem>帮助</MenuItem>
        <MenuItem>社区</MenuItem>
        <LogLine>
          <span>日志</span>
          <span>|</span>
          <LogMessage>
            严重
            <LogText>:18:29:24 pool-13-thread-1 ERROR [standard] Plugin not installed at designer end.Plugi...</LogText>
          </LogMessage>
        </LogLine>
        <SearchButton aria-label="搜索"><Search /></SearchButton>
        <UserBadge><BadgeMosaic /></UserBadge>
      </MenuBar>

      <Body>
        <DockEdge>
          <DockBlock $top={23} $size={1} $tone="#dadbde" />
          <DockBlock $top={276} $size={10} $tone="#e6e6e6" />
          <DockBlock $top={20} $size={26} $tone="#dadbde" />
        </DockEdge>
        <DockBar>
          <svg width="5" height="10" fill="#aaa"><path d="M5 0v10L0 5z" /></svg>
          <DockGrip />
        </DockBar>

        <Main>
          <TopToolbar />
          <FormatToolbar />
          <Ruler>
            {MARKS.map((m) => (
              <RulerMark key={m}>{m}</RulerMark>
            ))}
          </Ruler>
          <ParamPane>
            <SideRuler><SideZero>0</SideZero></SideRuler>
            <ParamBody />
            <ParamHandle />
            <ParamActions>
              <button aria-label="隐藏"><EyeOff /></button>
              <button aria-label="编辑"><Pencil /></button>
            </ParamActions>
          </ParamPane>
          <PaneGap />
          <Spreadsheet />
        </Main>

        <IconRail>
          <RailButton $short aria-label="收起">
            <svg width="6" height="10" fill="#999"><path d="M0 0v10l6-5z" /></svg>
          </RailButton>
          {RAIL.map(([name, icon], i) => (
            <RailButton key={name} $active={i === 0} aria-label={name}>{icon}</RailButton>
          ))}
        </IconRail>
        <PropertyPanel />
      </Body>
    </Window>
  </Page>
);

export default App;
